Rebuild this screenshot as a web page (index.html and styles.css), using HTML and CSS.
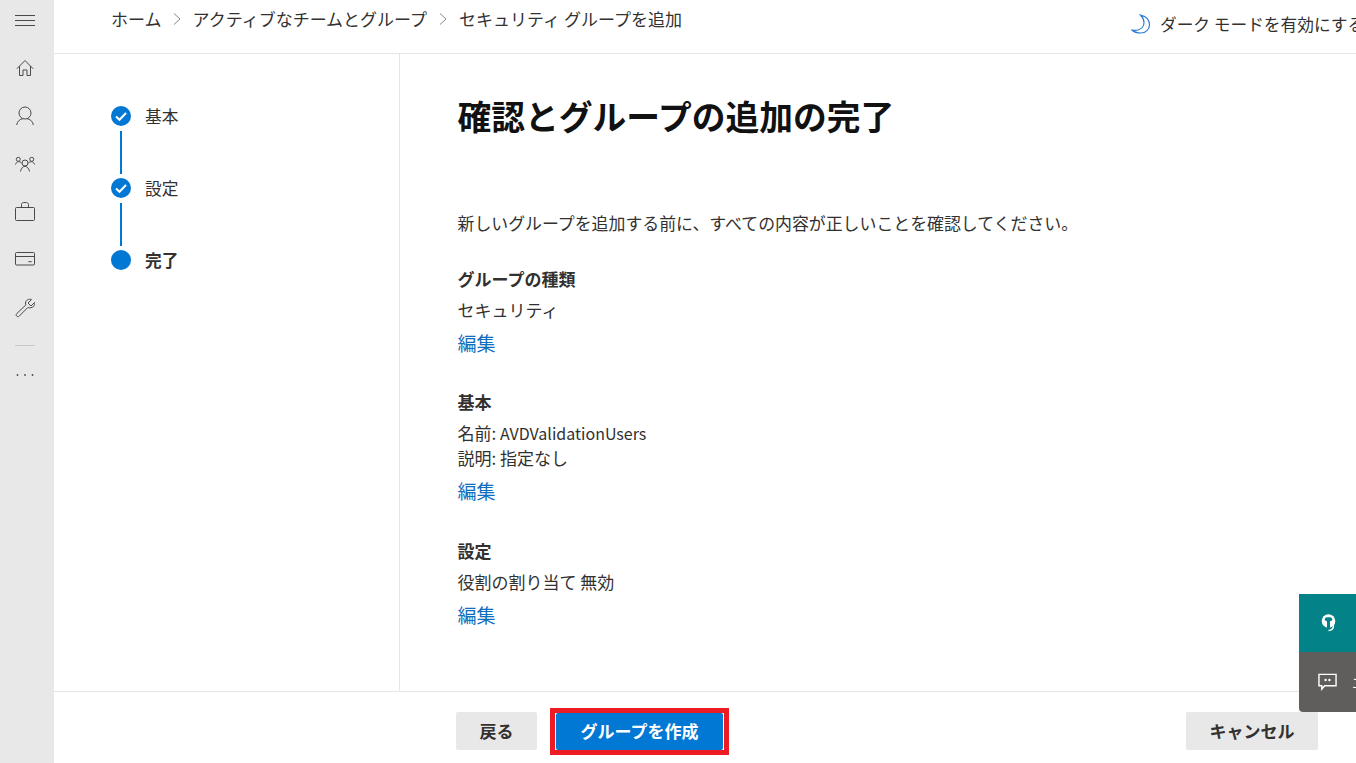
FILE: index.html
```html
<!DOCTYPE html>
<html lang="ja">
<head>
<meta charset="utf-8">
<title>セキュリティ グループを追加</title>
<link rel="stylesheet" href="styles.css">
</head>
<body>
<div class="app">
  <nav class="rail">
    <svg class="ic menu" viewBox="0 0 20 20"><path d="M0 5.500h20M0 10.500h20M0 15.500h20"/></svg>
    <svg class="ic" viewBox="0 0 20 20"><path d="M1.800 10.800 10 2.500l8.200 8.300M4.500 8v9.500H8V12h4v5.500h3.500V8"/></svg>
    <svg class="ic" viewBox="0 0 20 20"><circle cx="10" cy="7" r="6"/><path d="M1.700 19c.3-3.500 3.300-6 6.300-6.300M18.300 19c-.3-3.500-3.300-6-6.300-6.300"/></svg>
    <svg class="ic" viewBox="0 0 20 20"><circle cx="10" cy="9" r="3"/><circle cx="3.300" cy="5.300" r="2"/><circle cx="16.700" cy="5.300" r="2"/><path d="M.5 10.500C1 8.700 2 7.700 3.500 7.700s2.500.6 3.500 1.800M19.500 10.500c-.5-1.800-1.500-2.800-3-2.800s-2.500.6-3.500 1.800M5.500 17.500c.5-3 2.500-5.200 4.500-5.200s4 2.200 4.500 5.200"/></svg>
    <svg class="ic" viewBox="0 0 20 20"><rect x=".5" y="5.500" width="19" height="13" rx="1"/><path d="M6.500 5.500V2.500c0-1.500 1-2 3.500-2s3.500.5 3.500 2v3"/></svg>
    <svg class="ic" viewBox="0 0 20 20"><rect x=".5" y="2.500" width="19" height="12.500" rx="1"/><path d="M.5 6.500h19M13.300 11.700h3.400"/></svg>
    <svg class="ic" viewBox="0 0 20 20"><path d="M19.500 4.500 16 8l-3-3 3.500-3.500c-2.500-1-6 .7-6 3.500 0 .8.100 1.300.4 1.900L1.800 15.500c-.9 1-.8 1.900-.1 2.600s1.700.8 2.600-.1l8.600-8.600c.6.300 1.100.4 1.900.4 3.500 0 5.700-2.800 4.700-5.300z"/></svg>
    <hr class="rail-sep">
    <svg class="dots" viewBox="0 0 20 4"><circle cx="2.500" cy="2" r=".9"/><circle cx="10" cy="2" r=".9"/><circle cx="17.500" cy="2" r=".9"/></svg>
  </nav>
  <div class="page">
    <header class="top">
      <ol class="crumbs">
        <li class="home">ホーム</li>
        <li class="chev"><svg viewBox="0 0 8 12"><path d="M1 .5 7 6l-6 5.500"/></svg></li>
        <li>アクティブなチームとグループ</li>
        <li class="chev"><svg viewBox="0 0 8 12"><path d="M1 .5 7 6l-6 5.500"/></svg></li>
        <li>セキュリティ グループを追加</li>
      </ol>
      <div class="dark">
        <svg viewBox="0 0 20 20"><path d="M9.500 1C15 2 18.500 6 18.500 10.500 18.500 15.500 14.500 19 10 19 6 19 3 18 1 16c2 .5 4 .5 6 0 4-1 6-4.500 6-7.500 0-3-1.500-5.500-3.500-7.500z"/></svg>
        <span>ダーク モードを有効にする</span>
      </div>
    </header>
    <div class="mid">
      <aside class="steps">
        <div class="step">
          <span class="dot"><svg viewBox="0 0 20 20"><path d="M5 10.500l3.500 3.300L15 7"/></svg></span>
          <span class="lbl">基本</span>
        </div>
        <div class="line"></div>
        <div class="step">
          <span class="dot"><svg viewBox="0 0 20 20"><path d="M5 10.500l3.500 3.300L15 7"/></svg></span>
          <span class="lbl">設定</span>
        </div>
        <div class="line"></div>
        <div class="step">
          <span class="dot"></span>
          <span class="lbl cur">完了</span>
        </div>
      </aside>
      <main class="main">
        <h1>確認とグループの追加の完了</h1>
        <p class="intro">新しいグループを追加する前に、すべての内容が正しいことを確認してください。</p>
        <section class="sec">
          <h2>グループの種類</h2>
          <p>セキュリティ</p>
          <a class="edit" href="#">編集</a>
        </section>
        <section class="sec">
          <h2>基本</h2>
          <p>名前: <span class="lat">AVDValidationUsers</span></p>
          <p>説明: 指定なし</p>
          <a class="edit" href="#">編集</a>
        </section>
        <section class="sec">
          <h2>設定</h2>
          <p>役割の割り当て 無効</p>
          <a class="edit" href="#">編集</a>
        </section>
      </main>
    </div>
    <footer class="foot">
      <button class="btn">戻る</button>
      <span class="hl"><button class="btn pri">グループを作成</button></span>
      <button class="btn cancel">キャンセル</button>
    </footer>
  </div>
</div>
<div class="float">
  <div class="fb teal"><svg viewBox="0 0 19 18"><circle cx="9.500" cy="7" r="6.800"/><rect class="hole" x="5.800" y="3.200" width="7.400" height="4" rx="2"/><rect class="hole" x="8" y="5" width="3" height="9"/><path class="mic" d="M14.500 11c0 3.500-2 5.500-5 5.500"/></svg></div>
  <div class="fb gray"><svg viewBox="0 0 20 18"><path class="o" d="M1 1h18v12H7l-3 3.500V13H1z"/><circle cx="8" cy="7" r="1.300"/><circle cx="12" cy="7" r="1.300"/></svg><span class="fbt">エ</span></div>
</div>
</body>
</html>
```
FILE: styles.css
```css
* { box-sizing: border-box; }
html, body { margin: 0; height: 100%; overflow: hidden; }
body {
  font-family: "Noto Sans CJK JP", "Noto Sans", sans-serif;
  color: #323130;
  background: #fff;
  position: relative;
}
.app { display: flex; height: 763px; }

.rail {
  width: 54px;
  flex: none;
  background: #e8e8e8;
  display: flex;
  flex-direction: column;
  align-items: center;
  padding-right: 4px;
}
.ic {
  width: 20px;
  height: 20px;
  flex: none;
  fill: none;
  stroke: #4a4a4a;
  stroke-width: 1;
  margin-bottom: 28px;
}
.menu { margin-top: 10px; }
.rail-sep {
  width: 20px;
  height: 1px;
  border: 0;
  background: #c8c8c8;
  margin: -1px 0 27px;
}
.dots { width: 20px; height: 4px; fill: #4a4a4a; }

.page { flex: 1; min-width: 0; display: flex; flex-direction: column; }

.top {
  height: 54px;
  flex: none;
  border-bottom: 1px solid #e6e6e6;
  display: flex;
  justify-content: space-between;
  overflow: hidden;
  padding-left: 57px;
  font-size: 17px;
  line-height: 24px;
}
.crumbs {
  list-style: none;
  display: flex;
  align-items: flex-start;
  margin: 7px 0 0;
  padding: 0;
  white-space: nowrap;
}
.home { margin-right: -1px; }
.chev { width: 32px; height: 24px; display: flex; justify-content: center; align-items: center; }
.chev svg { width: 8px; height: 12px; fill: none; stroke: #8a8886; stroke-width: 1; }
.dark {
  display: flex;
  align-items: center;
  white-space: nowrap;
  width: 225px;
  flex: none;
  margin-top: -5px;
  overflow: hidden;
  gap: 9px;
  font-size: 16.700px;
}
.dark svg { width: 20px; height: 20px; flex: none; fill: none; stroke: #2b7cd3; stroke-width: 1.200; }

.mid { flex: 1; min-height: 0; display: flex; }
.steps {
  width: 346px;
  flex: none;
  border-right: 1px solid #e6e6e6;
  padding: 52px 0 0 57px;
}
.step { display: flex; align-items: center; height: 20px; }
.dot {
  width: 20px;
  height: 20px;
  border-radius: 50%;
  background: #0078d4;
  flex: none;
  display: flex;
}
.dot svg { width: 20px; height: 20px; fill: none; stroke: #fff; stroke-width: 2; }
.lbl { margin-left: 14px; font-size: 16.700px; line-height: 20px; }
.lbl.cur { font-weight: 700; }
.line { width: 2px; height: 43px; margin: 5px 0 4px 9px; background: #0078d4; }

.main { flex: 1; padding: 39px 0 0 57.500px; }
h1 {
  font-size: 33.750px;
  line-height: 46px;
  margin: 0 0 72px;
  font-weight: 700;
  color: #111;
}
.intro { margin: 0 0 32px; font-size: 16.900px; line-height: 24px; }
.sec { margin-bottom: 35.400px; }
.sec h2 { font-size: 17px; line-height: 24px; font-weight: 700; margin: 0 0 6px; }
.sec p { margin: 0; font-size: 17px; line-height: 25px; }
.lat { font-size: 16px; line-height: 1; }
.edit {
  display: block;
  margin-top: 9px;
  font-size: 19px;
  line-height: 24px;
  color: #106ebe;
  text-decoration: none;
}

.foot {
  height: 72px;
  flex: none;
  border-top: 1px solid #e6e6e6;
  display: flex;
  align-items: flex-start;
  padding: 20px 38px 0 402px;
}
.btn {
  font: 700 17px/24px "Noto Sans CJK JP", "Noto Sans", sans-serif;
  height: 38px;
  width: 81px;
  padding: 0;
  border: 0;
  border-radius: 2px;
  background: #e8e8e8;
  color: #323130;
}
.hl {
  display: block;
  margin: -4px 0 0 13px;
  padding: 0 1px;
  background: #fff;
  border: 5px solid #ed1c24;
}
.btn.pri { width: 167px; height: 37px; padding-bottom: 2px; background: #0078d4; color: #fff; display: block; }
.cancel { width: 132px; margin-left: auto; }

.float {
  position: absolute;
  right: 0;
  top: 594px;
  width: 57px;
}
.fb { display: flex; align-items: center; padding-left: 20px; overflow: hidden; }
.teal { height: 58px; background: #038387; }
.gray { height: 60px; padding-left: 19px; background: #605e5c; border-bottom-left-radius: 4px; }
.fb svg { width: 19px; height: 18px; fill: #fff; flex: none; }
.fb .o { fill: none; stroke: #fff; stroke-width: 1.500; }
.fb .hole { fill: #038387; }
.fb .mic { fill: none; stroke: #fff; stroke-width: 1.500; }
.fbt { color: #fff; font-size: 14px; margin-left: 15px; white-space: nowrap; }
```
